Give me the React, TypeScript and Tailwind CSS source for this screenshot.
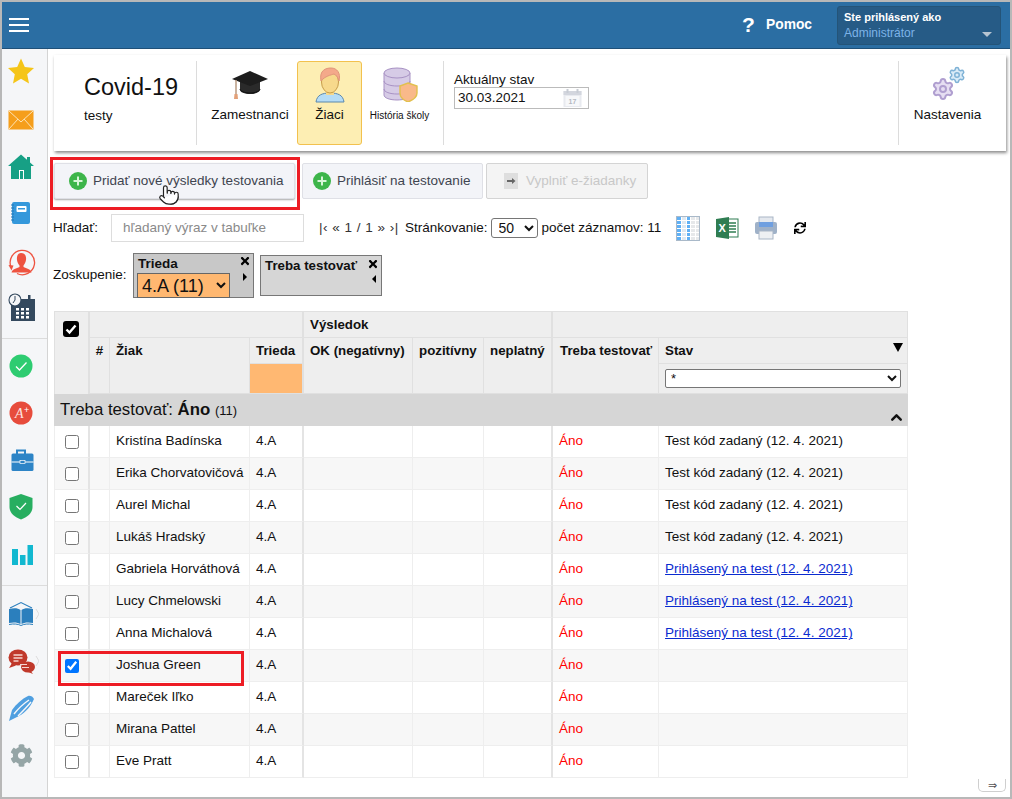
import React from "react";
import { Pointer, Settings, ChevronUp } from "lucide-react";
import { FaCog, FaSync, FaTimes } from "react-icons/fa";

function I({ mt, children }: { mt: string; children: React.ReactNode }) {
  return <div className={`w-9 h-9 ml-px flex items-center justify-center ${mt}`}>{children}</div>;
}
const S = ({ children }: { children: React.ReactNode }) => (
  <svg viewBox="0 0 36 36" className="w-9 h-9">{children}</svg>
);

function Sidebar() {
  return (
    <div className="w-[46px] shrink-0 bg-[#f5f6f8] border-r border-[#d4d4d4] flex flex-col">
      <div className="h-1" />
      <div className="w-9 h-9 ml-px">
        <S><polygon points="18,5.5 21.8,14 31,15 24.2,21.2 26,30.5 18,25.8 10,30.5 11.8,21.2 5,15 14.2,14" fill="#f5c518" /></S>
      </div>
      <I mt="mt-[13px]">
        <S><rect x="5.5" y="8.5" width="25" height="19" fill="#f59e1b" /><path d="M6 9l12 11 12-11M6 27l9-10M30 27l-9-10" stroke="#fde3b5" strokeWidth="1" fill="none" /></S>
      </I>
      <I mt="mt-[11px]">
        <S><path d="M18 5.500L31 17h-3v13H8V17H5z" fill="#17a085" /><rect x="24" y="8" width="3" height="6" fill="#17a085" /><rect x="16" y="21" width="5" height="9" fill="#fff" /><rect x="17" y="22" width="3" height="8" fill="#17a085" /></S>
      </I>
      <I mt="mt-[10px]">
        <S><rect x="9" y="7" width="18" height="22" rx="2" fill="#3498db" /><rect x="13.5" y="11" width="10" height="6" rx="1" fill="#fff" /><rect x="15" y="13" width="7" height="1.5" fill="#3498db" /><path d="M8 10h3M8 13h3M8 16h3M8 19h3M8 22h3M8 25h3" stroke="#2277b5" strokeWidth="1" /></S>
      </I>
      <I mt="mt-[13px]">
        <S><path d="M8 23A12.2 12.2 0 1 1 14 29.5" fill="none" stroke="#ee5340" strokeWidth="1.3" /><path d="M5.5 21l5 0.5-2 5z" fill="#ee5340" /><path d="M18 9c4 0 5.5 3 5 7-.4 2.5-1.6 4.5-2.5 5.5v1.5c3 1.3 7 2 8 5.5H8.5c1-3.5 5-4.2 8-5.5v-1.5c-1-1-2.200-3-2.500-5.500-.5-4 1-7 4-7z" fill="#ee5340" /></S>
      </I>
      <I mt="mt-[9px]">
        <S><rect x="8" y="10" width="24" height="22" fill="#34495e" /><rect x="25" y="6" width="2.500" height="6" fill="#34495e" /><circle cx="12" cy="11" r="6" fill="#f5f6f8" stroke="#34495e" strokeWidth="1.100" /><path d="M12 7v4l-2 3" stroke="#34495e" strokeWidth="1" fill="none" /><path d="M13 19h3v2.500h-3zM18 19h3v2.500h-3zM23 19h3v2.500h-3zM13 23h3v2.500h-3zM18 23h3v2.500h-3zM23 23h3v2.500h-3zM13 27h3v2.500h-3zM18 27h3v2.500h-3zM23 27h3v2.500h-3z" fill="#fff" /></S>
      </I>
      <div className="h-px bg-[#dcdcdc] mt-[13px]" />
      <I mt="mt-[9px]">
        <S><circle cx="18" cy="18" r="11.500" fill="#2ecc71" /><path d="M13 18.500l3.500 3.500 7-7.500" stroke="#fff" strokeWidth="1.300" fill="none" /></S>
      </I>
      <I mt="mt-[11px]">
        <S><circle cx="18" cy="18" r="11.500" fill="#e74c3c" /><text x="12" y="23" fontSize="14" fill="#fde4e0" fontStyle="italic" fontFamily="Liberation Serif, serif">A</text><text x="21" y="18" fontSize="9" fill="#fff" fontFamily="Liberation Sans, sans-serif">+</text></S>
      </I>
      <I mt="mt-[12px]">
        <S><path d="M14 11V7.500h8V11" fill="none" stroke="#2d84c6" strokeWidth="2" /><rect x="8.500" y="10.500" width="22" height="17.500" rx="1.500" fill="#2d84c6" /><path d="M8.500 19h22" stroke="#fff" strokeWidth="1" /><rect x="17" y="17.500" width="5" height="3" fill="#2d84c6" stroke="#fff" strokeWidth="0.700" /></S>
      </I>
      <I mt="mt-[9px]">
        <S><path d="M18 6l11.500 4v9c0 6-5 10-11.500 12.500C11.500 29 6.500 25 6.500 19v-9z" fill="#27ae60" /><path d="M13.500 18l3.500 3.500 6-6.500" stroke="#fff" strokeWidth="1.200" fill="none" /></S>
      </I>
      <I mt="mt-[12px]">
        <S><rect x="9" y="13" width="6" height="16" fill="#12b8d0" /><rect x="17" y="19" width="5.500" height="10" fill="#12b8d0" /><rect x="24.500" y="9" width="5.500" height="20" fill="#12b8d0" /></S>
      </I>
      <div className="h-px bg-[#dcdcdc] mt-[13px]" />
      <I mt="mt-[10px]">
        <S><path d="M7 12L18 6.500 29 12" fill="none" stroke="#2b7fbd" strokeWidth="1.100" /><path d="M6 13c5-1.500 9-1 11.500 1v14C15 26.500 11 26 6 27zM30 13c-5-1.500-9-1-11.500 1v14c2.500-1.500 6.500-2 11.500-1z" fill="#2b7fbd" /><path d="M6 28.500c5-1 9-.5 12 1 3-1.500 7-2 12-1" stroke="#2b7fbd" fill="none" /><path d="M33 13l3 5-3 5" stroke="#ddd" strokeWidth="1" fill="none" /></S>
      </I>
      <I mt="mt-[11px]">
        <S><ellipse cx="15" cy="14.500" rx="9.500" ry="8" fill="#c0392b" /><path d="M9 20l-3 5 7-2.500z" fill="#c0392b" /><path d="M10.500 12h9M10.500 15h9M10.500 18h5" stroke="#f6d5d0" strokeWidth="1.300" /><ellipse cx="25" cy="24" rx="7" ry="5.500" fill="#c0392b" /><path d="M27 27l3 4-6-2.500z" fill="#c0392b" /><path d="M17 21.500h7M19 24.500h7" stroke="#f6d5d0" strokeWidth="1" /><path d="M33 13l3 5-3 5" stroke="#ddd" strokeWidth="1" fill="none" /></S>
      </I>
      <I mt="mt-[11px]">
        <S><path d="M6 31l3-11C13 14 19 9 25 6c2-.8 5 .5 6 3-3 7-8 13-15 17z" fill="#4f9fe0" /><path d="M11 24c4-5 9-10 15-14M15 26c4-4 9-9 13-14" stroke="#f5f6f8" strokeWidth="1.400" fill="none" /></S>
      </I>
      <I mt="mt-[11px]">
        <FaCog className="text-[#95a5a6]" size={23} />
      </I>
    </div>
  );
}

function Header() {
  return (
    <div className="h-[47px] shrink-0 bg-[#2b6ea3] border-b border-[#1f5078] flex items-center text-white">
      <div className="ml-[7px] w-5 flex flex-col gap-[4px]">
        <div className="h-[2px] bg-white" />
        <div className="h-[2px] bg-white" />
        <div className="h-[2px] bg-white" />
      </div>
      <div className="ml-auto font-bold text-[21px] w-[19px]">?</div>
      <div className="ml-[5px] font-bold text-[13.800px] w-[46px]">Pomoc</div>
      <div className="ml-[25px] mr-[9px] w-[164px] h-[39px] rounded-[3px] bg-[#265b86] border border-[#245478] pl-[6px] pt-[3px] relative">
        <div className="text-[11px] font-bold leading-[15px]">Ste prihlásený ako</div>
        <div className="text-[12px] leading-[16px] text-[#7db3e8]">Administrátor</div>
        <div className="absolute right-[8px] top-[25px] w-0 h-0 border-l-[5px] border-r-[5px] border-t-[5px] border-l-transparent border-r-transparent border-t-[#b6c4d1]" />
      </div>
    </div>
  );
}

function TopCard() {
  return (
    <div className="h-[96px] w-[952px] bg-white shadow-[1px_2px_3px_rgba(0,0,0,0.45)] flex py-[6px]">
      <div className="w-[143px] border-r border-[#dcdcdc] pl-[30px] pt-[12px]">
        <div className="text-[23.500px] leading-[28px]">Covid-19</div>
        <div className="text-[13.500px] leading-[18px] mt-[6px]">testy</div>
      </div>
      <div className="w-[100px] pl-[6px] flex flex-col items-center pt-[9px]">
        <svg viewBox="0 0 36 30" className="w-[36px] h-[30px]">
          <path d="M8 12v8c0 2 4.500 4 10 4s10-2 10-4v-8z" fill="#2a2a2a" />
          <path d="M8 19c0 2 4.500 4 10 4s10-2 10-4" stroke="#111" fill="none" />
          <polygon points="18,1 36,9 18,16 0,9" fill="#1d1d1d" />
          <path d="M4 10v14" stroke="#b99a80" strokeWidth="1.500" />
          <path d="M2.500 24h3l.5 5H2z" fill="#e2a078" />
        </svg>
        <div className="text-[13.500px] mt-[6px] leading-[18px]">Zamestnanci</div>
      </div>
      <div className="w-[65px] h-[84px] bg-[#fdeeb3] border border-[#f2c14e] rounded-[3px] flex flex-col items-center">
        <svg viewBox="0 0 32 36" className="w-[32px] h-[36px] mt-[5px]">
          <path d="M2 35c1-7 6-9 14-9s13 2 14 9z" fill="#b5dcf6" stroke="#5b88ad" />
          <rect x="12" y="20" width="8" height="8" fill="#f7d98c" />
          <ellipse cx="16" cy="15" rx="8.500" ry="11" fill="#f7d98c" stroke="#c79d4a" />
          <path d="M7 14C5 3 12 1 17 1c6 0 10 5 8 13-1-4-3-6-5-7-3 1-9 2-13 7z" fill="#f4a98a" stroke="#e0957a" />
        </svg>
        <div className="text-[13.500px] leading-[18px] mt-[3px]">Žiaci</div>
      </div>
      <div className="w-[82px] pr-[6px] border-r border-[#dcdcdc] flex flex-col items-center pt-[5px]">
        <svg viewBox="0 0 36 36" className="w-[36px] h-[36px]">
          <path d="M2 7v22c0 3 6 5 13 5s13-2 13-5V7z" fill="#d6cbe6" stroke="#a892c4" />
          <ellipse cx="15" cy="7" rx="13" ry="5" fill="#d6cbe6" stroke="#a892c4" />
          <path d="M2 15c0 3 6 5 13 5s13-2 13-5M2 23c0 3 6 5 13 5s13-2 13-5" fill="none" stroke="#a892c4" />
          <path d="M26 17l9 3v7c0 4-4 7-9 9-5-2-8-5-8-9v-7z" fill="#f9b98a" stroke="#e2c04e" strokeWidth="1.400" />
        </svg>
        <div className="text-[10px] leading-[14px] mt-[7px] whitespace-nowrap">História školy</div>
      </div>
      <div className="ml-[10px] pt-[12px]">
        <div className="text-[13.500px] leading-[14px]">Aktuálny stav</div>
        <div className="w-[135px] h-[22px] border border-[#bbb] flex items-center justify-between pl-[3px] pr-[5px] text-[13.500px]">
          <span>30.03.2021</span>
          <svg viewBox="0 0 20 20" className="w-[21px] h-[20px]">
            <rect x="1" y="3" width="18" height="16" fill="#e8eaef" />
            <rect x="1" y="3" width="18" height="4" fill="#d3d6de" />
            <rect x="3" y="8" width="14" height="10" fill="#f7f8fa" />
            <rect x="4" y="1" width="2" height="4" fill="#c8ccd4" /><rect x="14" y="1" width="2" height="4" fill="#c8ccd4" />
            <text x="6" y="16" fontSize="7" fontWeight="bold" fill="#b5b9c2" fontFamily="Liberation Sans, sans-serif">17</text>
          </svg>
        </div>
      </div>
      <div className="ml-auto w-[108px] border-l border-[#dcdcdc] flex flex-col items-center relative">
        <div className="h-[41px] w-full relative">
          <Settings size={24} className="absolute left-[32px] top-[16px] text-[#b09fd0] fill-[#e6def2]" />
          <Settings size={18} className="absolute left-[49px] top-[5px] text-[#7fb2d6] fill-[#d9ebf7]" />
        </div>
        <div className="text-[13.500px] leading-[18px] mt-[4px] -ml-[10px]">Nastavenia</div>
      </div>
    </div>
  );
}

const Plus = () => (
  <span className="w-[18px] h-[18px] rounded-full bg-[#3db54a] text-white flex items-center justify-center">
    <svg viewBox="0 0 18 18" className="w-[18px] h-[18px]"><path d="M9 4.500v9M4.500 9h9" stroke="#d8f5d8" strokeWidth="2" /></svg>
  </span>
);

function Buttons() {
  return (
    <div className="flex mt-[12px] relative">
      <div className="w-[241px] h-[36px] bg-[#f3f4f8] border border-[#dfe0e6] rounded-[2px] shadow-[0_1px_2px_rgba(0,0,0,0.35)] flex items-center pl-[14px] gap-[6px] text-[13.500px] text-[#3f4550] relative">
        <Plus /><span>Pridať nové výsledky testovania</span>
        <Pointer size={22} className="absolute left-[103px] top-[20px] fill-white text-[#222]" strokeWidth={1.300} />
      </div>
      <div className="w-[181px] h-[36px] ml-[7px] bg-[#f3f4f8] border border-[#dfe0e6] rounded-[2px] flex items-center pl-[10px] gap-[6px] text-[13.500px] text-[#3f4550]">
        <Plus /><span>Prihlásiť na testovanie</span>
      </div>
      <div className="w-[162px] h-[36px] ml-[3px] bg-[#f4f4f4] border border-[#d4d4d4] rounded-[2px] flex items-center pl-[17px] gap-[8px] text-[13.500px] text-[#c8c8c8]">
        <svg viewBox="0 0 14 16" className="w-[14px] h-[16px]"><rect width="14" height="16" fill="#dedede" /><path d="M3 8h6" stroke="#666" strokeWidth="2" /><path d="M8 5l3.500 3L8 11z" fill="#666" /></svg>
        <span>Vyplniť e-žiadanky</span>
      </div>
      <div className="absolute left-[-4px] top-[-6px] w-[250px] h-[53px] border-[3px] border-[#ed1c24]" />
    </div>
  );
}

function TableIcon() {
  const cols = ["bg-[#5fb0f5]", "bg-[#dfe8f0]", "bg-[#5fb0f5]", "bg-[#e6e8ea]", "bg-[#e6e8ea]"];
  const cells = Array.from({ length: 30 }, (_, i) => cols[i % 5]);
  return (
    <div className="w-[24px] h-[25px] border border-[#a9b9c9] grid grid-cols-5 grid-rows-6 gap-px bg-white">
      {cells.map((c, i) => <div key={i} className={c} />)}
    </div>
  );
}

function Toolbar() {
  return (
    <div className="flex items-center mt-[15px] h-[28px] text-[13.500px]">
      <span className="w-[57px] -ml-[1px] mr-[1px]">Hľadať:</span>
      <div className="w-[193px] h-[28px] border border-[#ddd] flex items-center pl-[11px] text-[#8a8a8a]">hľadaný výraz v tabuľke</div>
      <span className="ml-[15px] w-[80px] tracking-[0.5px] whitespace-nowrap text-[#333]">|‹ « 1 / 1 » ›|</span>
      <span className="ml-[6px]">Stránkovanie:</span>
      <select defaultValue="50" className="ml-[3px] w-[47px] h-[20px] border border-[#767676] rounded-[3px] pl-[3px] text-[14px] bg-white">
        <option>50</option>
      </select>
      <span className="ml-[4px]">počet záznamov: 11</span>
      <div className="ml-[15px]"><TableIcon /></div>
      <svg viewBox="0 0 24 24" className="w-[24px] h-[24px] ml-[15px]">
        <rect x="10" y="3" width="13" height="18" fill="#fff" stroke="#2f7d52" />
        <path d="M14 7h7M14 10h7M14 13h7M14 16h7" stroke="#2f7d52" strokeWidth="1.400" />
        <path d="M1 3l13-2v22L1 21z" fill="#2f7d52" />
        <text x="3.500" y="16" fontSize="11" fontWeight="bold" fill="#fff" fontFamily="Liberation Sans, sans-serif">X</text>
      </svg>
      <svg viewBox="0 0 24 24" className="w-[24px] h-[24px] ml-[15px]">
        <rect x="5" y="1" width="14" height="8" fill="#e4e8ee" stroke="#a9b6c6" />
        <rect x="1" y="6" width="22" height="12" rx="2" fill="#9fb1c8" />
        <rect x="5" y="6" width="14" height="5" fill="#6f9fe0" />
        <rect x="5" y="15" width="14" height="8" fill="#eef0f3" stroke="#a9b6c6" />
      </svg>
      <FaSync size={12} className="ml-[16px] text-black" />
    </div>
  );
}

function Grouping() {
  return (
    <div className="flex items-center mt-[11px] h-[45px] text-[13.500px]">
      <span className="w-[79px] -ml-[1px] mr-[1px]">Zoskupenie:</span>
      <div className="w-[121px] h-[45px] bg-[#c8c8c8] border border-[#777] relative pl-[3px]">
        <div className="font-bold text-[13.500px] leading-[16px] mt-[2px] pl-[1px]">Trieda</div>
        <select defaultValue="a" className="w-[93px] h-[25px] bg-[#ffb871] border border-[#666] text-[18px] mt-[1px]">
          <option value="a">4.A (11)</option>
        </select>
        <FaTimes size={12} className="absolute right-[2px] top-[1px] text-black" />
        <div className="absolute right-[6px] top-[19px] w-0 h-0 border-t-[4px] border-b-[4px] border-l-[4px] border-t-transparent border-b-transparent border-l-black" />
      </div>
      <div className="w-[122px] h-[41px] ml-[6px] bg-[#d6d6d6] border border-[#777] relative pl-[4px]">
        <div className="font-bold text-[13.300px] leading-[16px] mt-[2px] whitespace-nowrap">Treba testovať</div>
        <FaTimes size={12} className="absolute right-[2px] top-[2px] text-black" />
        <div className="absolute right-[5px] top-[19px] w-0 h-0 border-t-[4px] border-b-[4px] border-r-[4px] border-t-transparent border-b-transparent border-r-black" />
      </div>
    </div>
  );
}

type Row = { name: string; stav?: string; link?: boolean; checked?: boolean };
const rows: Row[] = [
  { name: "Kristína Badínska", stav: "Test kód zadaný (12. 4. 2021)" },
  { name: "Erika Chorvatovičová", stav: "Test kód zadaný (12. 4. 2021)" },
  { name: "Aurel Michal", stav: "Test kód zadaný (12. 4. 2021)" },
  { name: "Lukáš Hradský", stav: "Test kód zadaný (12. 4. 2021)" },
  { name: "Gabriela Horváthová", stav: "Prihlásený na test (12. 4. 2021)", link: true },
  { name: "Lucy Chmelowski", stav: "Prihlásený na test (12. 4. 2021)", link: true },
  { name: "Anna Michalová", stav: "Prihlásený na test (12. 4. 2021)", link: true },
  { name: "Joshua Green", checked: true },
  { name: "Mareček Iľko" },
  { name: "Mirana Pattel" },
  { name: "Eve Pratt" },
];

const th = "bg-[#eeeeee] border-r border-b border-[#e0e0e0] font-bold text-[13.300px] align-top pt-[5px] leading-[16px] whitespace-nowrap";

function DataTable() {
  return (
    <table className="table-fixed border-separate border-spacing-0 w-[854px] mt-[13px] text-[13.500px]">
      <colgroup>
        <col className="w-[36px]" />
        <col className="w-[20px]" />
        <col className="w-[140px]" />
        <col className="w-[54px]" />
        <col className="w-[109px]" />
        <col className="w-[71px]" />
        <col className="w-[69px]" />
        <col className="w-[106px]" />
        <col className="w-[249px]" />
      </colgroup>
      <thead>
        <tr className="h-[27px]">
          <th rowSpan={3} className="bg-[#eeeeee] border-r-2 border-t border-l border-[#e0e0e0] align-top pt-[9px]">
            <span className="ml-[8px] flex w-4 h-4 rounded-[3px] bg-black items-center justify-center">
              <svg viewBox="0 0 16 16" className="w-4 h-4"><path d="M3.500 8.500l3 3 6-7" stroke="#fff" strokeWidth="2.400" fill="none" /></svg>
            </span>
          </th>
          <th colSpan={3} className="bg-[#eeeeee] border-r-2 border-t border-b border-[#e0e0e0]" />
          <th colSpan={3} className={`${th} text-left pl-[6px] border-t border-r-2`}>Výsledok</th>
          <th colSpan={2} className="bg-[#eeeeee] border-t border-r border-b border-[#e0e0e0]" />
        </tr>
        <tr className="h-[26px]">
          <th rowSpan={2} className={`${th} text-center`}>#</th>
          <th rowSpan={2} className={`${th} text-left pl-[6px]`}>Žiak</th>
          <th className={`${th} text-left pl-[6px] border-r-2`}>Trieda</th>
          <th rowSpan={2} className={`${th} text-left pl-[6px]`}>OK (negatívny)</th>
          <th rowSpan={2} className={`${th} text-left pl-[6px]`}>pozitívny</th>
          <th rowSpan={2} className={`${th} text-left pl-[6px] border-r-2`}>neplatný</th>
          <th rowSpan={2} className={`${th} text-left pl-[7px]`}>Treba testovať</th>
          <th className={`${th} text-left pl-[6px] relative`}>
            Stav
            <span className="absolute right-[4px] top-[5px] w-0 h-0 border-l-[5px] border-r-[5px] border-t-[9px] border-l-transparent border-r-transparent border-t-black" />
          </th>
        </tr>
        <tr className="h-[30px]">
          <th className="bg-[#ffb872] border-r-2 border-b border-r-[#e0e0e0] border-b-[#e0e0e0]" />
          <th className="bg-[#eeeeee] border-r border-b border-[#e0e0e0] px-[6px] align-middle">
            <select defaultValue="*" className="w-full h-[19px] bg-white border border-[#767676] rounded-[2px] text-[13px] font-normal pl-[1px] block">
              <option>*</option>
            </select>
          </th>
        </tr>
      </thead>
      <tbody>
        <tr className="h-[32px]">
          <td colSpan={9} className="bg-[#d6d6d6] pl-[6px] pr-[3px] relative text-[16.800px]">
            Treba testovať: <b>Áno</b> <span className="text-[13px]">(11)</span>
            <ChevronUp size={17} strokeWidth={3.500} className="absolute right-[3px] bottom-0" />
          </td>
        </tr>
        {rows.map((r, i) => {
          const bg = i % 2 ? "bg-[#f7f7f7]" : "bg-white";
          const td = `${bg} border-r border-b border-[#eeeeee] px-[6px] whitespace-nowrap`;
          return (
            <tr key={r.name} className="h-[32px]">
              <td className={`${bg} border-l border-b border-r-2 border-[#e4e4e4] border-l-[#eeeeee] border-b-[#eeeeee]`}>
                <input type="checkbox" defaultChecked={r.checked} className="block mx-auto w-[14px] h-[14px]" />
              </td>
              <td className={td} />
              <td className={td}>{r.name}</td>
              <td className={`${td} border-r-2 border-r-[#e4e4e4]`}>4.A</td>
              <td className={td} />
              <td className={td} />
              <td className={`${td} border-r-2 border-r-[#e4e4e4]`} />
              <td className={`${td} text-[#ff0000]`}>Áno</td>
              <td className={td}>
                {r.link ? <a className="text-[#0a2bd0] underline">{r.stav}</a> : r.stav}
              </td>
            </tr>
          );
        })}
      </tbody>
    </table>
  );
}

export default function App() {
  return (
    <div className="w-[1012px] h-[799px] border-2 border-[#b8b8b8] bg-white flex flex-col overflow-hidden font-['Liberation_Sans',Arial,sans-serif] text-[#111]">
      <Header />
      <div className="flex flex-1 min-h-0">
        <Sidebar />
        <div className="flex-1 min-w-0 pl-[6px] pt-[6px] relative">
          <TopCard />
          <Buttons />
          <Toolbar />
          <Grouping />
          <DataTable />
          <div className="absolute left-[10px] top-[602px] w-[186px] h-[35px] border-[3px] border-[#ed1c24] pointer-events-none" />
          <div className="absolute right-[4px] bottom-[5px] w-[28px] h-[13px] border border-t-0 border-[#cfcfcf] rounded-b-[5px] flex items-center justify-center text-[11px] leading-none text-[#555]">⇒</div>
        </div>
      </div>
    </div>
  );
}
